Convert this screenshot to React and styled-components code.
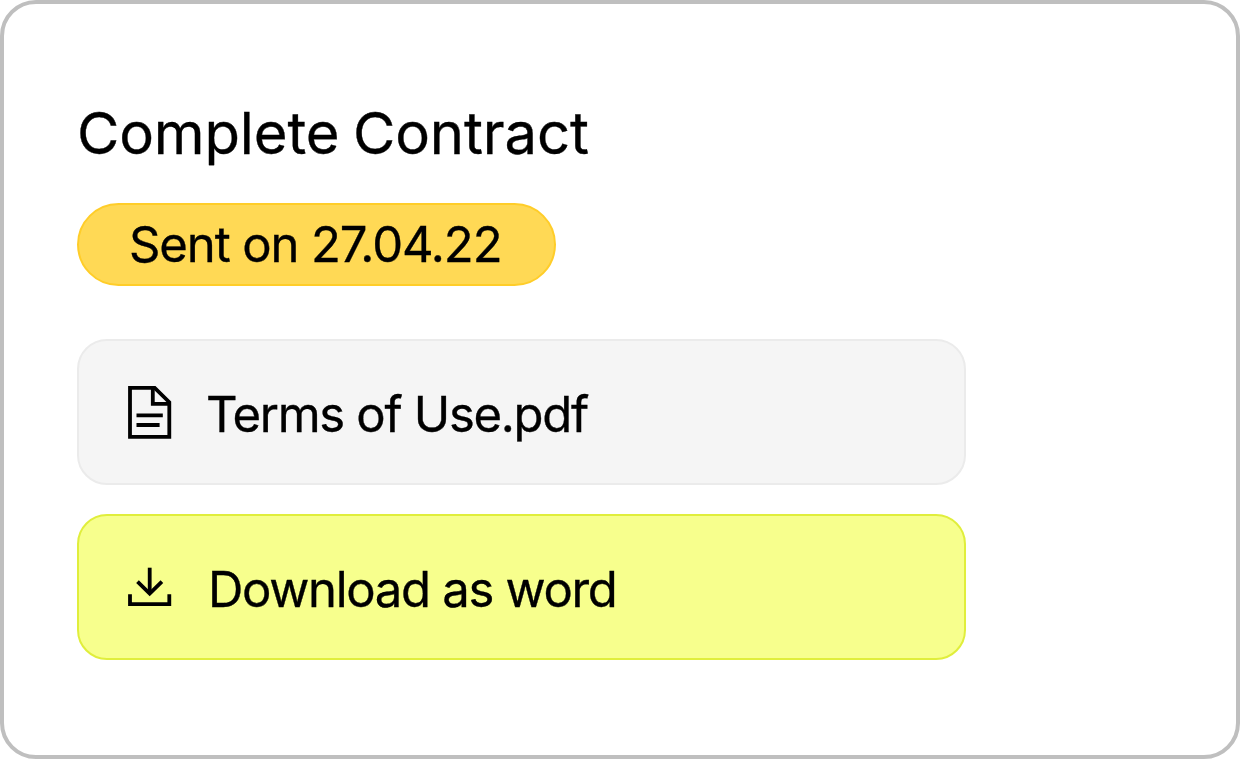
import React from 'react';
import styled, { createGlobalStyle } from 'styled-components';

const GlobalStyle = createGlobalStyle`
  body {
    margin: 0;
    background-color: #fff;
  }
`;

const Card = styled.main`
  box-sizing: border-box;
  width: 1240px;
  height: 759px;
  padding: 94px 73px 0;
  border: 4px solid #bfbfbf;
  border-radius: 36px;
  background-color: #fff;
  color: #000;
  font-family: Inter, 'Liberation Sans', sans-serif;
  -webkit-text-stroke: 0.35px #000;
`;

const Title = styled.h1`
  margin: 0 0 33px;
  font-size: 58px;
  font-weight: 400;
  line-height: 71px;
  padding-bottom: 1px;
  letter-spacing: -0.15px;
  word-spacing: -2.5px;
  white-space: nowrap;
`;

const Status = styled.div`
  box-sizing: border-box;
  width: 479px;
  height: 83px;
  margin-bottom: 53px;
  padding-left: 50px;
  border: 2px solid #ffcd29;
  border-radius: 42px;
  background-color: #ffd955;
  font-size: 49px;
  line-height: 79px;
  letter-spacing: -1.1px;
  white-space: nowrap;
`;

const Actions = styled.div`
  display: flex;
  flex-direction: column;
  gap: 29px;
  width: 889px;
`;

const Action = styled.button`
  box-sizing: border-box;
  display: flex;
  align-items: center;
  height: 146px;
  padding: 0 0 0 42px;
  border: 2px solid ${(props) => (props.$primary ? '#e0ee3c' : '#ebebeb')};
  border-radius: 30px;
  background-color: ${(props) => (props.$primary ? '#f7ff8d' : '#f5f5f5')};
  color: inherit;
  font-family: inherit;
  text-align: left;
  cursor: pointer;
`;

const Icon = styled.svg`
  flex: none;
  width: 58px;
  height: 58px;
  margin-right: ${(props) => props.$gap};
  fill: none;
  stroke: #000;
  stroke-width: 3.8;
`;

const Label = styled.span`
  padding-top: 5px;
  font-size: 49px;
  line-height: 60px;
  letter-spacing: -1.3px;
  white-space: nowrap;
`;

function App() {
  return (
    <>
      <GlobalStyle />
      <Card>
        <Title>Complete Contract</Title>
        <Status>Sent on 27.04.22</Status>

        <Actions>
          <Action>
            <Icon viewBox="0 0 58 58" $gap="27px">
              <path d="M9 4.8H33.7L48.3 19.2V53.9H9Z" />
              <path d="M31.8 4.8V20.8H48.3" />
              <path d="M15.5 32.4H41.8M15.5 42H38.6" />
            </Icon>
            <Label>Terms of Use.pdf</Label>
          </Action>
          <Action $primary>
            <Icon viewBox="0 0 58 58" $gap="29px">
              <path d="M28.7 9.7V35.5" />
              <path d="M16.5 23.7L28.7 35.5L40.9 23.7" />
              <path d="M9 36.3V46.2H48.3V36.3" />
            </Icon>
            <Label>Download as word</Label>
          </Action>
        </Actions>
      </Card>
    </>
  );
}

export default App;
